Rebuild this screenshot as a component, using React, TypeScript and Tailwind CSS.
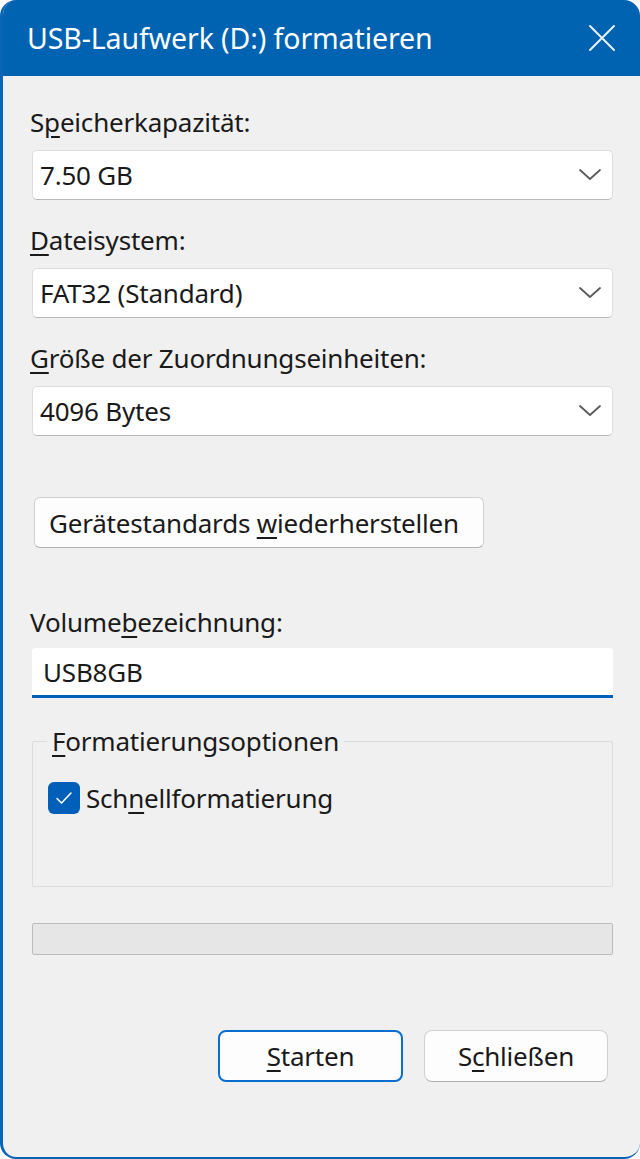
import React from "react";

function Chevron() {
  return (
    <svg width="24" height="14" viewBox="0 0 24 14" fill="none">
      <path d="M2 2 L12 11 L22 2" stroke="#5a5a5a" strokeWidth="1.8" strokeLinecap="round" strokeLinejoin="round" />
    </svg>
  );
}

function Select({ value }: { value: string }) {
  return (
    <div className="flex h-[50px] items-center justify-between rounded-[5px] border border-[#dcdcdc] border-b-[#b8b8b8] bg-white pl-[7px] pr-[10px]">
      <span className="text-[#1a1a1a]">{value}</span>
      <Chevron />
    </div>
  );
}

const U = ({ children }: { children: React.ReactNode }) => (
  <span className="underline underline-offset-[4px] decoration-[1.5px]">{children}</span>
);

export default function App() {
  return (
    <div
      className="flex h-[1159px] w-[640px] flex-col overflow-hidden rounded-[16px] border-b-[2px] border-l-[3px] border-[#0a64b8] bg-[#f0f0f0] text-[26px] leading-none tracking-[-0.2px]"
      style={{ fontFamily: '"Noto Sans", "Segoe UI", sans-serif' }}
    >
      {/* Title bar */}
      <div className="flex h-[76px] shrink-0 items-center justify-between bg-[#0063b1] pl-[24px] pr-[24px]">
        <span className="text-[28.5px] tracking-[-0.1px] text-white">USB-Laufwerk (D:) formatieren</span>
        <svg width="28" height="28" viewBox="0 0 28 28" fill="none">
          <path d="M2 2 L26 26 M26 2 L2 26" stroke="#e8f0f8" strokeWidth="2" strokeLinecap="round" />
        </svg>
      </div>

      <div className="flex flex-col pl-[29px] pr-[27px]">
        <div className="-ml-[2px] mt-[32px] h-[28px] leading-[28px] text-[#1a1a1a]">
          S<U>p</U>eicherkapazität:
        </div>
        <div className="mt-[14px]">
          <Select value="7.50 GB" />
        </div>

        <div className="-ml-[2px] mt-[26px] h-[28px] leading-[28px] text-[#1a1a1a]">
          <U>D</U>ateisystem:
        </div>
        <div className="mt-[14px]">
          <Select value="FAT32 (Standard)" />
        </div>

        <div className="-ml-[2px] mt-[26px] h-[28px] leading-[28px] text-[#1a1a1a]">
          <U>G</U>röße der Zuordnungseinheiten:
        </div>
        <div className="mt-[14px]">
          <Select value="4096 Bytes" />
        </div>

        <div className="mt-[61px] flex">
          <div className="ml-[2px] flex h-[51px] w-[450px] items-center rounded-[6px] border border-[#d0d0d0] border-b-[#b0b0b0] bg-[#fdfdfd] pl-[14px] text-[#1a1a1a]">
            <span>
              Gerätestandards <U>w</U>iederherstellen
            </span>
          </div>
        </div>

        <div className="-ml-[2px] mt-[60px] h-[28px] leading-[28px] text-[#1a1a1a]">
          Volume<U>b</U>ezeichnung:
        </div>
        <div className="mt-[12px] flex h-[50px] items-center rounded-t-[4px] border-b-[3px] border-[#005fb8] bg-white pl-[11px] text-[#1a1a1a]">
          USB8GB
        </div>

        {/* group box */}
        <div className="relative mt-[43px] h-[146px] rounded-[2px] border border-[#dcdcdc]">
          <div className="absolute -top-[15px] left-[14px] bg-[#f0f0f0] px-[5px] leading-[28px] text-[#1a1a1a]">
            <U>F</U>ormatierungsoptionen
          </div>
          <div className="mt-[40px] flex items-center pl-[15px]">
            <div className="flex h-[32px] w-[32px] items-center justify-center rounded-[6px] bg-[#005fb8]">
              <svg width="18" height="14" viewBox="0 0 18 14" fill="none">
                <path d="M2 7.5 L6.5 12 L16 2" stroke="white" strokeWidth="1.6" strokeLinecap="round" strokeLinejoin="round" />
              </svg>
            </div>
            <span className="ml-[6px] text-[#1a1a1a]">
              Sch<U>n</U>ellformatierung
            </span>
          </div>
        </div>

        {/* progress */}
        <div className="mt-[36px] h-[32px] rounded-[2px] border border-[#bcbcbc] bg-[#e6e6e6]" />

        {/* buttons */}
        <div className="mt-[75px] flex justify-end gap-[21px] pr-[5px]">
          <div className="flex h-[52px] w-[185px] items-center justify-center rounded-[8px] border-[2px] border-[#0a6ed1] bg-[#fdfdfd] text-[#1a1a1a]">
            <span>
              <U>S</U>tarten
            </span>
          </div>
          <div className="flex h-[52px] w-[184px] items-center justify-center rounded-[8px] border border-[#d0d0d0] border-b-[#b0b0b0] bg-[#fdfdfd] text-[#1a1a1a]">
            <span>
              S<U>c</U>hließen
            </span>
          </div>
        </div>
      </div>
    </div>
  );
}
